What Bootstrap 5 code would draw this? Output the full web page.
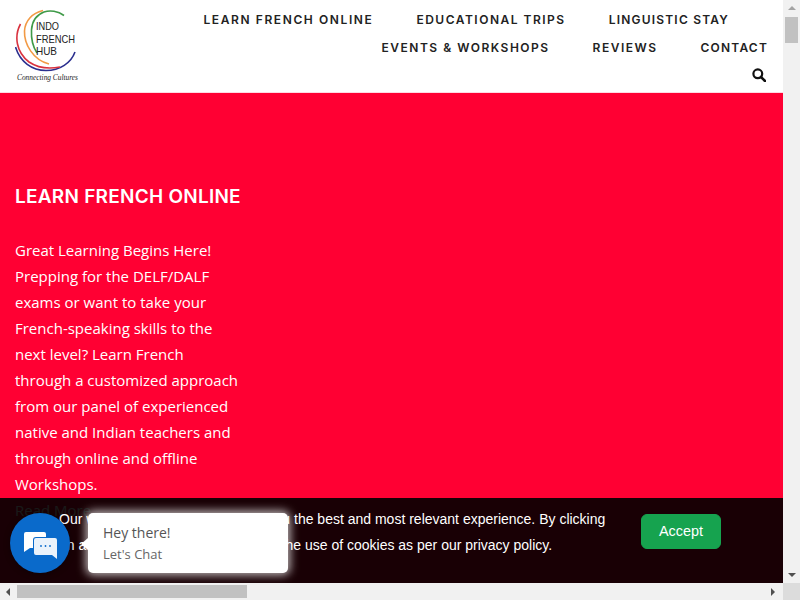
<!DOCTYPE html>
<html lang="en">
<head>
<meta charset="utf-8">
<title>Indo French Hub</title>
<link href="https://cdn.jsdelivr.net/npm/bootstrap@5.3.0/dist/css/bootstrap.min.css" rel="stylesheet">
<style>
html,body{height:600px;overflow:hidden;margin:0;}
.frame{height:600px;width:800px;}
.viewport{min-height:0;min-width:0;}
.site-head{height:93px;padding:0 15px;border-bottom:1px solid #ffd9e2;}
.logo-box{width:70px;height:85px;margin-top:5px;}
.menu-font{font-family:Inter,"Liberation Sans",sans-serif;font-size:12px;font-weight:600;letter-spacing:1.5px;color:#222;line-height:28px;text-decoration:none;white-space:nowrap;}
.menu-tight{letter-spacing:1.2px;}
.menu-wide{letter-spacing:1.6px;}
.menu-row{height:28px;gap:43px;}
.menu-row-first{padding-right:39px;}
.menu-wrap{padding-top:6px;}
.search-row{height:26px;padding-right:2px;}
.hero-band{background:#ff0033;color:#fff;padding:89px 15px 0;}
.hero-text{width:228px;}
.hero-title{font-family:Inter,"Liberation Sans",sans-serif;font-size:19px;font-weight:600;letter-spacing:.25px;line-height:30px;margin:0 0 25px;white-space:nowrap;}
.hero-copy{font-family:"Open Sans",sans-serif;font-size:15px;line-height:26px;margin:0;}
.hero-more{font-family:"Open Sans",sans-serif;font-size:15px;line-height:26px;color:#fff;text-decoration:none;}
.cookie-strip{left:0;right:0;bottom:0;height:85px;background:rgba(0,0,0,.9);}
.cookie-text{position:absolute;left:59px;top:8px;width:570px;font-family:"Liberation Sans",sans-serif;font-size:14px;line-height:26px;color:#fff;white-space:nowrap;}
.accept-btn{position:absolute;left:641px;top:16px;width:80px;height:35px;background:#16a34f;border-color:#16a34f;color:#fff;font-family:"Liberation Sans",sans-serif;font-size:14.4px;line-height:1;padding:0;}
.chat-fab{position:absolute;left:10px;bottom:10px;width:60px;height:60px;background:#0a6acb;box-shadow:0 1px 6px rgba(0,0,0,.4);}
.chat-icon{margin:5px 0 0 1px;}
.chat-pop{position:absolute;left:88px;bottom:10px;width:200px;height:60px;background:#fff;border-radius:5px;box-shadow:0 0 10px 2px rgba(255,255,255,.75);padding:10px 15px;font-family:"Open Sans",sans-serif;color:#555;}
.chat-pop::before{content:"";position:absolute;left:-7px;top:25px;border-style:solid;border-width:6px 7px 6px 0;border-color:transparent #fff transparent transparent;}
.chat-hi{font-size:14px;line-height:20px;}
.chat-sub{font-size:13px;line-height:20px;margin-top:1px;color:#666;}
.v-scroll{width:17px;background:#f1f1f1;}
.h-scroll{height:17px;background:#f1f1f1;}
.v-thumb{position:absolute;left:2px;right:2px;top:17px;height:26px;background:#c1c1c1;}
.h-thumb{position:absolute;left:17px;top:2px;bottom:2px;width:230px;background:#c1c1c1;}
.sb-corner{position:absolute;right:0;top:0;width:17px;height:17px;background:#dcdcdc;}
.arrow{position:absolute;width:0;height:0;border-style:solid;}
.arrow-up{left:5px;top:6px;border-width:0 4px 4px;border-color:transparent transparent #a3a3a3;}
.arrow-down{left:5px;bottom:6px;border-width:4px 4px 0;border-color:#505050 transparent transparent;}
.arrow-left{left:6px;top:5px;border-width:4px 4px 4px 0;border-color:transparent #505050 transparent transparent;}
.arrow-right{left:771px;top:5px;border-width:4px 0 4px 4px;border-color:transparent transparent transparent #505050;}
.logo-name{font-family:"Liberation Sans",sans-serif;font-size:10.5px;fill:#222;}
.logo-tag{font-family:"Liberation Serif",serif;font-style:italic;font-size:7.5px;fill:#222;}
</style>
</head>
<body>
<div class="frame d-flex flex-column bg-white">
  <div class="d-flex flex-grow-1 viewport">
    <div class="flex-grow-1 position-relative overflow-hidden d-flex flex-column viewport">
      <header class="site-head d-flex justify-content-between bg-white">
        <a href="#" class="logo-box d-block">
          <svg width="70" height="85" viewBox="15 5 70 85" fill="none">
            <path d="M15.5 47C20 62 32 70.5 46 70.5C60 70.5 71 63 75 52" stroke="#2b2f8f" stroke-width="1.6"/>
            <path d="M20.5 24C14 36 16 52 29 62C38 68 50 69 60 67" stroke="#d9323f" stroke-width="1.6"/>
            <path d="M43 10.5C32 13 25 21 24.5 31C24 44 33 60 49 64" stroke="#f29a45" stroke-width="1.6"/>
            <path d="M64 15.5C58 11 50 10 44 12C36 15 32 22 31.5 30C31 39 33 47 37 53" stroke="#3f9a48" stroke-width="1.6"/>
            <text class="logo-name" x="36" y="30" textLength="23" lengthAdjust="spacingAndGlyphs">INDO</text>
            <text class="logo-name" x="36" y="43" textLength="39" lengthAdjust="spacingAndGlyphs">FRENCH</text>
            <text class="logo-name" x="36" y="55" textLength="21" lengthAdjust="spacingAndGlyphs">HUB</text>
            <text class="logo-tag" x="17" y="80" textLength="61" lengthAdjust="spacingAndGlyphs">Connecting Cultures</text>
          </svg>
        </a>
        <nav class="menu-wrap">
          <div class="menu-row menu-row-first d-flex justify-content-end">
            <a class="menu-font menu-wide" href="#">LEARN FRENCH ONLINE</a>
            <a class="menu-font" href="#">EDUCATIONAL TRIPS</a>
            <a class="menu-font menu-tight" href="#">LINGUISTIC STAY</a>
          </div>
          <div class="menu-row d-flex justify-content-end">
            <a class="menu-font" href="#">EVENTS &amp; WORKSHOPS</a>
            <a class="menu-font" href="#">REVIEWS</a>
            <a class="menu-font menu-tight" href="#">CONTACT</a>
          </div>
          <div class="search-row d-flex justify-content-end align-items-center">
            <svg width="14" height="14" viewBox="0 0 14 14" fill="none" stroke="#111" aria-label="Search">
              <circle cx="5.8" cy="5.8" r="4.4" stroke-width="2.2"/>
              <path d="M9 9l4 4" stroke-width="2.6" stroke-linecap="round"/>
            </svg>
          </div>
        </nav>
      </header>
      <main class="hero-band flex-grow-1">
        <div class="hero-text">
          <h1 class="hero-title">LEARN FRENCH ONLINE</h1>
          <p class="hero-copy">Great Learning Begins Here!<br>Prepping for the DELF/DALF exams or want to take your French-speaking skills to the next level? Learn French through a customized approach from our panel of experienced native and Indian teachers and through online and offline Workshops.</p>
          <a class="hero-more" href="#">Read More</a>
        </div>
      </main>
      <div class="cookie-strip position-absolute">
        <div class="cookie-text">Our website uses cookies to give you the best and most relevant experience. By clicking<br>on accept button, you also agree to the use of cookies as per our privacy policy.</div>
        <button type="button" class="btn accept-btn">Accept</button>
      </div>
      <div class="chat-fab rounded-circle d-flex align-items-center justify-content-center">
        <svg class="chat-icon" width="33" height="27" viewBox="24 532 33 27">
          <path d="M26 532h18a2 2 0 0 1 2 2v3H36a3 3 0 0 0-3 3v8h-3l-6 4V534a2 2 0 0 1 2-2z" fill="#fff"/>
          <path d="M36 538h19a2 2 0 0 1 2 2v19l-5-4H36a2 2 0 0 1-2-2v-13a2 2 0 0 1 2-2z" fill="#eaf2fb"/>
          <circle cx="41" cy="546" r=".9" fill="#0a6acb"/><circle cx="45.5" cy="546" r=".9" fill="#0a6acb"/><circle cx="50" cy="546" r=".9" fill="#0a6acb"/>
        </svg>
      </div>
      <div class="chat-pop">
        <div class="chat-hi">Hey there!</div>
        <div class="chat-sub">Let's Chat</div>
      </div>
    </div>
    <div class="v-scroll position-relative">
      <span class="arrow arrow-up"></span>
      <div class="v-thumb"></div>
      <span class="arrow arrow-down"></span>
    </div>
  </div>
  <div class="h-scroll position-relative">
    <span class="arrow arrow-left"></span>
    <div class="h-thumb"></div>
    <span class="arrow arrow-right"></span>
    <div class="sb-corner"></div>
  </div>
</div>
<script src="https://cdn.jsdelivr.net/npm/bootstrap@5.3.0/dist/js/bootstrap.bundle.min.js"></script>
</body>
</html>
